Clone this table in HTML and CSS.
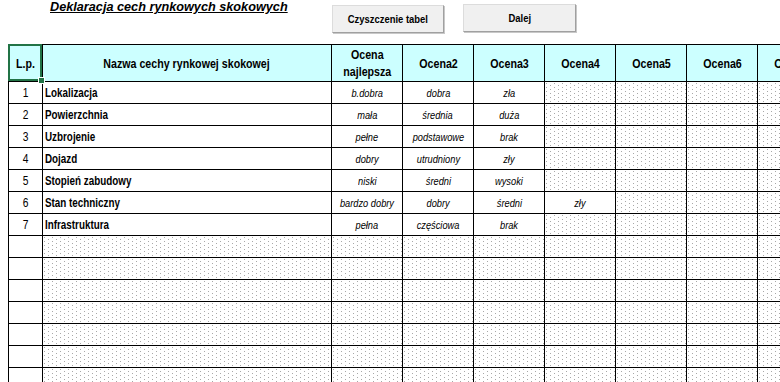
FILE: index.html
```html
<!DOCTYPE html>
<html lang="pl">
<head>
<meta charset="utf-8">
<title>Deklaracja cech rynkowych skokowych</title>
<link rel="stylesheet" href="styles.css">
</head>
<body>
<div class="top">
  <h1 class="title">Deklaracja cech rynkowych skokowych</h1>
  <button class="btn btn-clear"><span class="t">Czyszczenie tabel</span></button>
  <button class="btn btn-next"><span class="t">Dalej</span></button>
</div>
<div class="sheet">
  <div class="c h sel"><span class="t">L.p.</span></div>
  <div class="c h"><span class="t">Nazwa cechy rynkowej skokowej</span></div>
  <div class="c h"><span class="t">Ocena<br>najlepsza</span></div>
  <div class="c h"><span class="t">Ocena2</span></div>
  <div class="c h"><span class="t">Ocena3</span></div>
  <div class="c h"><span class="t">Ocena4</span></div>
  <div class="c h"><span class="t">Ocena5</span></div>
  <div class="c h"><span class="t">Ocena6</span></div>
  <div class="c h"><span class="t">Ocena7</span></div>

  <div class="c num"><span class="t">1</span></div><div class="c name"><span class="t">Lokalizacja</span></div><div class="c val"><span class="t">b.dobra</span></div><div class="c val"><span class="t">dobra</span></div><div class="c val"><span class="t">zła</span></div><div class="c dot"></div><div class="c dot"></div><div class="c dot"></div><div class="c dot"></div>
  <div class="c num"><span class="t">2</span></div><div class="c name"><span class="t">Powierzchnia</span></div><div class="c val"><span class="t">mała</span></div><div class="c val"><span class="t">średnia</span></div><div class="c val"><span class="t">duża</span></div><div class="c dot"></div><div class="c dot"></div><div class="c dot"></div><div class="c dot"></div>
  <div class="c num"><span class="t">3</span></div><div class="c name"><span class="t">Uzbrojenie</span></div><div class="c val"><span class="t">pełne</span></div><div class="c val"><span class="t">podstawowe</span></div><div class="c val"><span class="t">brak</span></div><div class="c dot"></div><div class="c dot"></div><div class="c dot"></div><div class="c dot"></div>
  <div class="c num"><span class="t">4</span></div><div class="c name"><span class="t">Dojazd</span></div><div class="c val"><span class="t">dobry</span></div><div class="c val"><span class="t">utrudniony</span></div><div class="c val"><span class="t">zły</span></div><div class="c dot"></div><div class="c dot"></div><div class="c dot"></div><div class="c dot"></div>
  <div class="c num"><span class="t">5</span></div><div class="c name"><span class="t">Stopień zabudowy</span></div><div class="c val"><span class="t">niski</span></div><div class="c val"><span class="t">średni</span></div><div class="c val"><span class="t">wysoki</span></div><div class="c dot"></div><div class="c dot"></div><div class="c dot"></div><div class="c dot"></div>
  <div class="c num"><span class="t">6</span></div><div class="c name"><span class="t">Stan techniczny</span></div><div class="c val"><span class="t">bardzo dobry</span></div><div class="c val"><span class="t">dobry</span></div><div class="c val"><span class="t">średni</span></div><div class="c val"><span class="t">zły</span></div><div class="c dot"></div><div class="c dot"></div><div class="c dot"></div>
  <div class="c num"><span class="t">7</span></div><div class="c name"><span class="t">Infrastruktura</span></div><div class="c val"><span class="t">pełna</span></div><div class="c val"><span class="t">częściowa</span></div><div class="c val"><span class="t">brak</span></div><div class="c dot"></div><div class="c dot"></div><div class="c dot"></div><div class="c dot"></div>

  <div class="c num"></div><div class="c dot"></div><div class="c dot"></div><div class="c dot"></div><div class="c dot"></div><div class="c dot"></div><div class="c dot"></div><div class="c dot"></div><div class="c dot"></div>
  <div class="c num"></div><div class="c dot"></div><div class="c dot"></div><div class="c dot"></div><div class="c dot"></div><div class="c dot"></div><div class="c dot"></div><div class="c dot"></div><div class="c dot"></div>
  <div class="c num"></div><div class="c dot"></div><div class="c dot"></div><div class="c dot"></div><div class="c dot"></div><div class="c dot"></div><div class="c dot"></div><div class="c dot"></div><div class="c dot"></div>
  <div class="c num"></div><div class="c dot"></div><div class="c dot"></div><div class="c dot"></div><div class="c dot"></div><div class="c dot"></div><div class="c dot"></div><div class="c dot"></div><div class="c dot"></div>
  <div class="c num"></div><div class="c dot"></div><div class="c dot"></div><div class="c dot"></div><div class="c dot"></div><div class="c dot"></div><div class="c dot"></div><div class="c dot"></div><div class="c dot"></div>
  <div class="c num"></div><div class="c dot"></div><div class="c dot"></div><div class="c dot"></div><div class="c dot"></div><div class="c dot"></div><div class="c dot"></div><div class="c dot"></div><div class="c dot"></div>
  <div class="c num"></div><div class="c dot"></div><div class="c dot"></div><div class="c dot"></div><div class="c dot"></div><div class="c dot"></div><div class="c dot"></div><div class="c dot"></div><div class="c dot"></div>
  <div class="c num"></div><div class="c dot"></div><div class="c dot"></div><div class="c dot"></div><div class="c dot"></div><div class="c dot"></div><div class="c dot"></div><div class="c dot"></div><div class="c dot"></div>
</div>
</body>
</html>
```

FILE: styles.css
```css
html, body {
  margin: 0;
  padding: 0;
  background: #ffffff;
  overflow: hidden;
}

body {
  font-family: "Liberation Sans", Arial, sans-serif;
  color: #000000;
}

/* Arial Narrow look: Liberation Sans condensed horizontally */
.t {
  display: inline-block;
  transform: scaleX(0.82);
  transform-origin: 50% 50%;
  white-space: nowrap;
}

.top {
  display: flex;
  align-items: flex-start;
  height: 44px;
  padding-left: 50px;
  box-sizing: border-box;
}

.title {
  margin: 0;
  width: 282px;
  font-family: "Liberation Sans", Arial, sans-serif;
  font-size: 12.7px;
  line-height: 15px;
  font-weight: bold;
  font-style: italic;
  text-decoration: underline;
  white-space: nowrap;
}

.btn {
  height: 28px;
  padding: 0;
  font-family: "Liberation Sans", Arial, sans-serif;
  font-size: 11.5px;
  font-weight: bold;
  color: #000000;
  background: #f0f0f0;
  border: 1px solid #dcdcdc;
  border-right-color: #a0a0a0;
  border-bottom-color: #a0a0a0;
  box-shadow: 1px 1px 0 #c8c8c8;
}

.btn-clear {
  width: 112px;
  margin-top: 5px;
}

.btn-next {
  width: 113px;
  margin-top: 4px;
  margin-left: 19px;
}

.sheet {
  display: grid;
  grid-template-columns: 34px 289px repeat(7, 71px);
  grid-template-rows: 37px;
  grid-auto-rows: 22px;
  width: max-content;
  margin-left: 8px;
  border-left: 1px solid #000000;
  border-top: 1px solid #000000;
}

.c {
  box-sizing: border-box;
  border-right: 1px solid #000000;
  border-bottom: 1px solid #000000;
  display: flex;
  align-items: center;
  justify-content: center;
  overflow: hidden;
  white-space: nowrap;
}

.h {
  background: #ccffff;
  font-size: 13px;
  line-height: 17px;
  font-weight: bold;
  text-align: center;
}

.sel {
  position: relative;
  overflow: visible;
}

.sel::after {
  content: "";
  position: absolute;
  left: -1px;
  top: -1px;
  right: 0;
  bottom: 0;
  border: 2px solid #217346;
}

.sel::before {
  content: "";
  position: absolute;
  left: 29px;
  top: 32px;
  width: 5px;
  height: 5px;
  background: #217346;
  border: 1px solid #ffffff;
  z-index: 2;
}

.num {
  font-size: 12.5px;
}

.name {
  justify-content: flex-start;
  padding-left: 2px;
  font-size: 12px;
  font-weight: bold;
}

.name .t {
  transform-origin: 0 50%;
}

.val {
  font-size: 11.3px;
  font-style: italic;
}

.dot {
  background-color: #ffffff;
  background-image: url("data:image/svg+xml,%3Csvg xmlns='http://www.w3.org/2000/svg' width='8' height='4'%3E%3Crect x='1' y='1' width='1' height='1' fill='%23a8a8a8'/%3E%3Crect x='5' y='3' width='1' height='1' fill='%23a8a8a8'/%3E%3C/svg%3E");
  background-size: 8px 4px;
}
```
